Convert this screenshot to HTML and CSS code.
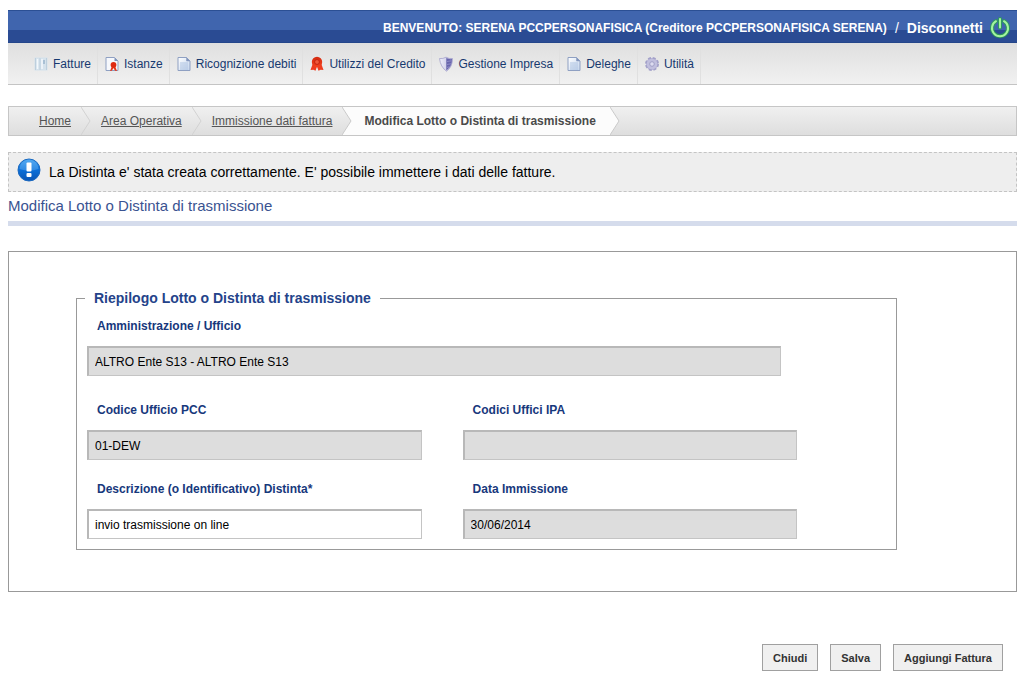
FILE: index.html
```html
<!DOCTYPE html>
<html lang="it">
<head>
<meta charset="utf-8">
<meta name="viewport" content="width=device-width, initial-scale=1">
<title>Modifica Lotto o Distinta di trasmissione</title>
<link rel="stylesheet" href="styles.css">
</head>
<body>
<svg class="defs" width="0" height="0" aria-hidden="true">
  <defs>
    <linearGradient id="page-fill" x1="0" y1="0" x2="1" y2="1">
      <stop offset="0" stop-color="#fff"/><stop offset="1" stop-color="#c3d4ec"/>
    </linearGradient>
    <linearGradient id="red-fill" x1="0" y1="0" x2="0" y2="1">
      <stop offset="0" stop-color="#d42a10"/><stop offset="1" stop-color="#f4431f"/>
    </linearGradient>
    <linearGradient id="info-fill" x1="0" y1="0" x2="0" y2="1">
      <stop offset="0" stop-color="#3f9fee"/><stop offset=".5" stop-color="#0b6fd8"/><stop offset="1" stop-color="#0a55b4"/>
    </linearGradient>
    <linearGradient id="shield-fill" x1="0" y1="0" x2="1" y2="0">
      <stop offset="0" stop-color="#f0f0fa"/><stop offset="1" stop-color="#b9b8de"/>
    </linearGradient>
    <symbol id="doc" viewBox="0 0 14 16">
      <path d="M1 1.500h8.500l3.500 3.500v9.500H1z" fill="url(#page-fill)" stroke="#8fa0c2"/>
      <path d="M9.500 1.500V5H13z" fill="#7f93bb" stroke="#8fa0c2" stroke-width=".6"/>
      <path d="M3 7h8M3 9h8M3 11h8M3 13h8" stroke="#a9bfe0" stroke-width=".9"/>
    </symbol>
    <symbol id="ribbon" viewBox="0 0 14 16">
      <path d="M3 7L.5 14l2.900-.3L5.500 14.800 7 10.500l1.500 4.300 2.100-1.100 2.900.3L11 7z" fill="#ee3d20"/>
      <circle cx="7" cy="6" r="5.200" fill="url(#red-fill)"/>
      <circle cx="7" cy="6" r="2.400" fill="#f0593a" stroke="#b91c0a" stroke-width=".8"/>
    </symbol>
  </defs>
</svg>

<header class="topbar">
  <span class="welcome">BENVENUTO: SERENA PCCPERSONAFISICA (Creditore PCCPERSONAFISICA SERENA)</span>
  <span class="slash">/</span>
  <a class="logout" href="#">Disconnetti
    <svg class="power" viewBox="0 0 22 22" aria-hidden="true">
      <g fill="none" stroke-linecap="round">
        <path d="M7 4.200a8 8 0 1 0 8 0M11 2v8.500" stroke="#2aa54c" stroke-width="4" opacity=".8"/>
        <path d="M7 4.200a8 8 0 1 0 8 0M11 2v8.500" stroke="#a4f3a0" stroke-width="2"/>
      </g>
    </svg>
  </a>
</header>

<nav class="menu" aria-label="Menu principale">
  <a class="menu-item" href="#">
    <svg class="menu-icon" viewBox="0 0 14 16" aria-hidden="true">
      <path d="M.5 1.500h13v13H.5z" fill="#d5e2ec"/>
      <path d="M1.500 2v12M6 2v12M12.500 2v12" stroke="#bdcfdd"/>
      <path d="M3.500 3v10M8 3v10" stroke="#f3f8fb" stroke-width="1.500"/>
      <path d="M9 4h2v4H9z" fill="#a9c0d4"/>
    </svg>Fatture</a>
  <a class="menu-item" href="#">
    <svg class="menu-icon" viewBox="0 0 14 16" aria-hidden="true">
      <path d="M1 1.500h8.500l3.500 3.500v9.500H1z" fill="#f6f8fc" stroke="#8fa0c2"/>
      <path d="M9.500 1.500V5H13z" fill="#7f93bb"/>
      <path d="M7 10l-2 5 1.800-.3L8.500 12l1.500 2.700 2 .3-2-5z" fill="#e5361c"/>
      <circle cx="8.500" cy="8.800" r="2.900" fill="#de2a12"/>
    </svg>Istanze</a>
  <a class="menu-item" href="#"><svg class="menu-icon" aria-hidden="true"><use href="#doc"/></svg>Ricognizione debiti</a>
  <a class="menu-item" href="#"><svg class="menu-icon" aria-hidden="true"><use href="#ribbon"/></svg>Utilizzi del Credito</a>
  <a class="menu-item" href="#">
    <svg class="menu-icon" viewBox="0 0 14 16" aria-hidden="true">
      <path d="M.5 2.500Q4 3 7 1.200 10 3 13.500 2.500 13.500 11 7.500 15.200 1.500 11 .5 2.500z" fill="url(#shield-fill)" stroke="#a3a1cb" stroke-width=".8"/>
      <path d="M7.300 2Q10 3.500 13 3q0 7.500-5.700 11.500z" fill="#6865ac"/>
      <path d="M8 5.500l4.500-.7M8 8.500l4-.7M8 11.500l2.500-.8" stroke="#8f8cc8"/>
    </svg>Gestione Impresa</a>
  <a class="menu-item" href="#"><svg class="menu-icon" aria-hidden="true"><use href="#doc"/></svg>Deleghe</a>
  <a class="menu-item" href="#">
    <svg class="menu-icon" viewBox="0 0 14 16" aria-hidden="true">
      <circle cx="7" cy="8" r="6" fill="#b5b2d6" stroke="#a3a1c9" stroke-width="2" stroke-dasharray="3 1.712"/>
      <circle cx="7" cy="8" r="5.300" fill="#c1bfde"/>
      <circle cx="7" cy="8" r="2.300" fill="#dddcf0" stroke="#a19fc6"/>
    </svg>Utilità</a>
</nav>

<nav class="crumbs" aria-label="Percorso">
  <a class="crumb" href="#">Home</a>
  <svg class="chevron" viewBox="0 0 10 28" aria-hidden="true"><path d="M0 0l9 14-9 14" fill="none" stroke="#d2d2d2"/></svg>
  <a class="crumb" href="#">Area Operativa</a>
  <svg class="chevron" viewBox="0 0 10 28" aria-hidden="true"><path d="M0 0l9 14-9 14" fill="none" stroke="#d2d2d2"/></svg>
  <a class="crumb" href="#">Immissione dati fattura</a>
  <svg class="chevron" viewBox="0 0 10 28" aria-hidden="true"><path d="M0 0h10v28H0l9-14z" fill="#fcfcfc"/><path d="M0 0l9 14-9 14" fill="none" stroke="#cacaca"/></svg>
  <span class="crumb crumb-current" aria-current="page">Modifica Lotto o Distinta di trasmissione</span>
  <svg class="chevron" viewBox="0 0 10 28" aria-hidden="true"><path d="M0 0l9 14-9 14z" fill="#fcfcfc"/><path d="M0 0l9 14-9 14" fill="none" stroke="#cacaca"/></svg>
</nav>

<main>
  <div class="message" role="status">
    <svg class="info" viewBox="0 0 24 24" aria-hidden="true">
      <circle cx="12" cy="12" r="11" fill="url(#info-fill)" stroke="#1b69c0"/>
      <path d="M2.500 11a9.500 9.500 0 0 1 19 0Q12 14 2.500 11z" fill="#7cc0f8" opacity=".35"/>
      <rect x="9.500" y="4.500" width="5" height="9" rx="1" fill="#fff"/>
      <rect x="9.500" y="15" width="5" height="4" rx="1" fill="#fff"/>
    </svg>
    <span>La Distinta e' stata creata correttamente. E' possibile immettere i dati delle fatture.</span>
  </div>

  <h1 class="title">Modifica Lotto o Distinta di trasmissione</h1>

  <form class="form">
    <div class="panel">
      <fieldset class="summary">
        <legend class="legend">Riepilogo Lotto o Distinta di trasmissione</legend>
        <div class="field field-wide">
          <label class="label" for="ente">Amministrazione / Ufficio</label>
          <input class="input" id="ente" type="text" value="ALTRO Ente S13 - ALTRO Ente S13" readonly>
        </div>
        <div class="row">
          <div class="field">
            <label class="label" for="pcc">Codice Ufficio PCC</label>
            <input class="input" id="pcc" type="text" value="01-DEW" readonly>
          </div>
          <div class="field">
            <label class="label" for="ipa">Codici Uffici IPA</label>
            <input class="input" id="ipa" type="text" value="" readonly>
          </div>
        </div>
        <div class="row">
          <div class="field">
            <label class="label" for="descr">Descrizione (o Identificativo) Distinta*</label>
            <input class="input" id="descr" type="text" value="invio trasmissione on line">
          </div>
          <div class="field">
            <label class="label" for="data">Data Immissione</label>
            <input class="input" id="data" type="text" value="30/06/2014" readonly>
          </div>
        </div>
      </fieldset>
    </div>
    <div class="actions">
      <button class="button" type="button">Chiudi</button>
      <button class="button" type="button">Salva</button>
      <button class="button" type="button">Aggiungi Fattura</button>
    </div>
  </form>
</main>
</body>
</html>
```
FILE: styles.css
```css
* {
  box-sizing: border-box;
}

body {
  margin: 10px 7px 8px 8px;
  background: #fff;
  font: 12px/16px "Liberation Sans", Arial, sans-serif;
  color: #000;
}

.defs {
  position: absolute;
}

.topbar {
  display: flex;
  align-items: center;
  justify-content: flex-end;
  gap: 8px;
  height: 33px;
  padding: 2px 6px 0 8px;
  border-top: 1px solid #2b4f94;
  border-bottom: 1px solid #24468a;
  background: linear-gradient(#4065ae 0, #4065ae 19px, #2a4b93 19px, #2a4b93 100%);
  color: #fff;
  font-weight: bold;
}

.slash {
  font-size: 14px;
  font-weight: normal;
}

.logout {
  display: flex;
  align-items: center;
  gap: 6px;
  color: #fff;
  font-size: 14px;
  text-decoration: none;
}

.power {
  width: 22px;
  height: 22px;
}

.menu {
  display: flex;
  height: 42px;
  padding: 1px 19px 0;
  border-bottom: 1px solid #c4c4c4;
  background: linear-gradient(#dfdfdf, #f1f1f1);
}

.menu-item {
  display: flex;
  align-items: center;
  gap: 5px;
  padding: 0 6px 0 7px;
  border-right: 1px solid #e0e0e0;
  color: #17396f;
  text-decoration: none;
  white-space: nowrap;
}

.menu-icon {
  width: 14px;
  height: 16px;
}

.crumbs {
  display: flex;
  align-items: center;
  height: 30px;
  margin-top: 21px;
  padding-left: 20px;
  border: 1px solid #c6c6c6;
  background: linear-gradient(#f0f0f0, #dedede);
}

.crumb {
  padding: 0 10px;
  color: #555;
  line-height: 28px;
  white-space: nowrap;
}

.crumb-current {
  padding: 0 14px 0 12px;
  background: #fcfcfc;
  color: #4a4a4a;
  font-weight: bold;
}

.chevron {
  width: 10px;
  height: 28px;
}

.message {
  display: flex;
  align-items: center;
  gap: 8px;
  min-height: 40px;
  margin-top: 16px;
  padding: 0 8px;
  border: 1px dashed #c4c4c4;
  background: #eee;
  font-size: 14px;
}

.info {
  width: 24px;
  height: 24px;
  margin-bottom: 4px;
}

.title {
  margin: 0;
  padding: 4px 0 5px;
  border-bottom: 5px solid #d5dcec;
  color: #3a5391;
  font-size: 15px;
  font-weight: normal;
  line-height: 20px;
}

.panel {
  margin-top: 25px;
  padding: 38px 119px 41px 67px;
  border: 1px solid #999;
}

.summary {
  min-width: 0;
  margin: 0;
  padding: 0 11px 10px 10px;
  border: 1px solid #999;
}

.legend {
  margin-left: -2px;
  padding: 0 9px;
  color: #24438a;
  font-size: 14px;
  font-weight: bold;
}

.row {
  display: grid;
  grid-template-columns: 1fr 1fr;
  gap: 41px;
  width: 89%;
  margin-top: 21px;
}

.row:nth-of-type(2) {
  margin-top: 26px;
}

.field {
  display: flex;
  flex-direction: column;
  gap: 12px;
}

.field-wide {
  width: 87%;
  margin-top: 12px;
}

.label {
  padding-left: 10px;
  color: #17387c;
  font-weight: bold;
}

.input {
  width: 100%;
  height: 30px;
  padding: 0 6px;
  border: 1px solid #c4c4c4;
  border-top: 2px solid #b8b8b8;
  border-left: 2px solid #b8b8b8;
  border-radius: 0;
  background: #fff;
  color: #000;
  font: inherit;
}

.input:read-only {
  background: #ddd;
}

.actions {
  display: flex;
  justify-content: flex-end;
  gap: 12px;
  margin-top: 52px;
  padding-right: 14px;
}

.button {
  height: 27px;
  padding: 0 10px;
  border: 1px solid #a0a0a0;
  border-radius: 0;
  background: #f0f0f0;
  color: #333;
  font: bold 11px/16px "Liberation Sans", Arial, sans-serif;
}
```
